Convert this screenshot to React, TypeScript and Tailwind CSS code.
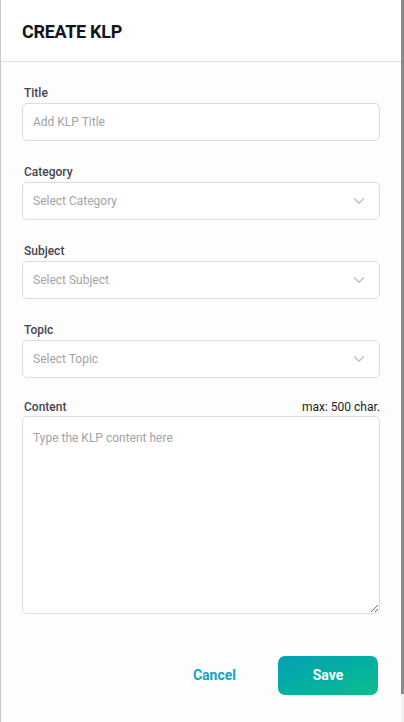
import { ChevronDown } from 'lucide-react';

// -----------------------------------------------------------------------------
// Pieces
// -----------------------------------------------------------------------------

const Label: React.FC<{ children: React.ReactNode }> = ({ children }) => (
  <label className="block pl-[2px] text-[12px] font-medium leading-4 text-[#45454f]">{children}</label>
);

const SelectField: React.FC<{ label: string; placeholder: string }> = ({ label, placeholder }) => (
  <div className="flex flex-col gap-[2px]">
    <Label>{label}</Label>
    <div className="flex h-[38px] items-center justify-between rounded-[5px] border border-[#dcdcdc] bg-white pl-[10px] pr-[11px]">
      <span className="text-[12px] text-[#a3a3a3]">{placeholder}</span>
      <ChevronDown className="size-[18px] text-[#bdbdbd]" strokeWidth={1.7} />
    </div>
  </div>
);

// -----------------------------------------------------------------------------
// Component
// -----------------------------------------------------------------------------

export default function App() {
  return (
    <div className="flex h-[722px] w-[404px] font-['Roboto',sans-serif]">
      <div className="flex flex-1 flex-col border-l border-[#c8c8c8] bg-[#fdfdfd]">
        <div className="flex h-[62px] items-center border-b border-[#e2e2e2] bg-white pl-[21px]">
          <h1 className="pt-[1px] text-[18px] font-bold tracking-[-0.3px] text-[#14141f]">CREATE KLP</h1>
        </div>

        <div className="flex flex-col px-[21px] pt-[23px]">
          <div className="flex flex-col gap-[2px]">
            <Label>Title</Label>
            <div className="flex h-[38px] items-center rounded-[5px] border border-[#dcdcdc] bg-white pl-[10px]">
              <span className="text-[12px] text-[#a3a3a3]">Add KLP Title</span>
            </div>
          </div>

          <div className="mt-[23px] flex flex-col gap-[23px]">
            <SelectField label="Category" placeholder="Select Category" />
            <SelectField label="Subject" placeholder="Select Subject" />
            <SelectField label="Topic" placeholder="Select Topic" />
          </div>

          <div className="mt-[21px] flex flex-col gap-[1px]">
            <div className="flex items-center justify-between">
              <Label>Content</Label>
              <span className="text-[12px] leading-4 text-[#222]">max: 500 char.</span>
            </div>
            <textarea
              className="h-[198px] w-full resize-y rounded-[5px] border border-[#dcdcdc] bg-white px-[10px] py-[12px] text-[12px] outline-none placeholder:text-[#a3a3a3]"
              placeholder="Type the KLP content here"
            />
          </div>

          <div className="mt-[42px] flex items-center justify-end gap-[42px] pr-[2px]">
            <button className="text-[14px] font-bold text-[#13a3c4]">Cancel</button>
            <button className="h-[39px] w-[100px] rounded-[7px] bg-gradient-to-br from-[#06a0b5] to-[#10bd8c] text-[14px] font-bold text-white">
              Save
            </button>
          </div>
        </div>
      </div>
      <div className="flex w-[3px] flex-col">
        <div className="h-[694px] bg-[#8a8a8a]" />
        <div className="flex-1 bg-[#f2f2f2]" />
      </div>
    </div>
  );
}
